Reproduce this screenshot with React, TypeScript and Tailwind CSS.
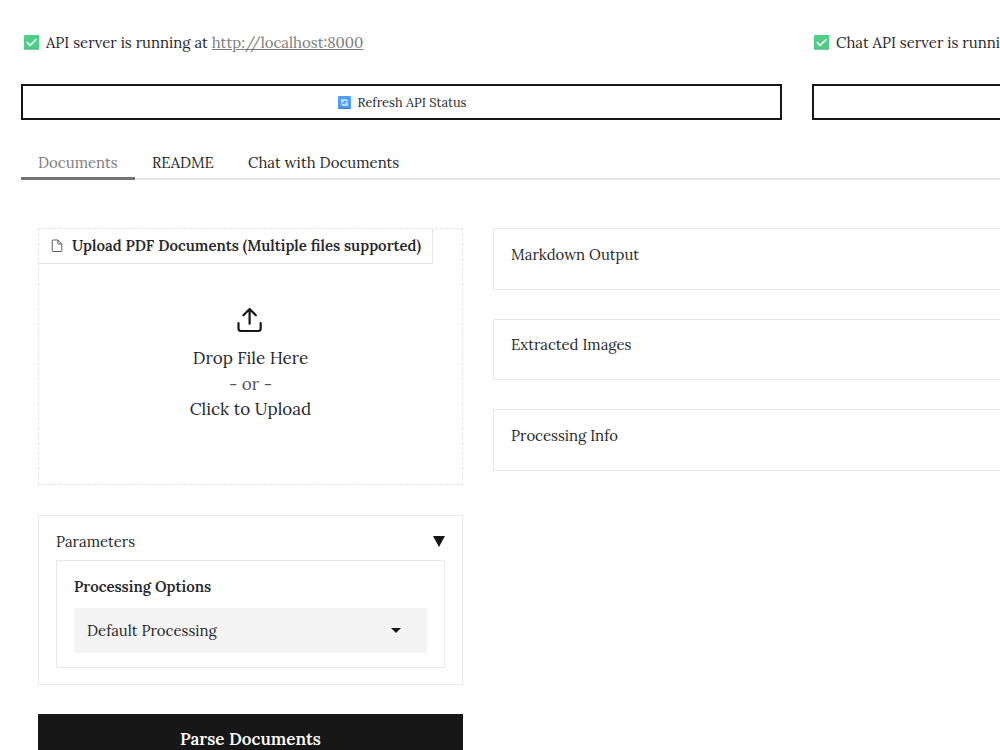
import { useState } from "react";

function CheckEmoji() {
    return (
        <svg width="16" height="15" viewBox="0 0 16 15" className="shrink-0">
            <rect x="0" y="0" width="15.2" height="14.6" rx="1.2" fill="#4fce87" />
            <path d="M0.1 13.4h15v0a1.2 1.2 0 0 1-1.2 1.2H1.3a1.2 1.2 0 0 1-1.2-1.2z" fill="#46bd7b" />
            <path d="M2.8 7l3.2 3.4 6.4-6.2" fill="none" stroke="#fff" strokeWidth="1.6" />
        </svg>
    );
}

function RefreshEmoji() {
    return (
        <svg width="13" height="13" viewBox="0 0 13 13" className="shrink-0">
            <rect width="13" height="13" rx="0.8" fill="#4f9ff5" />
            <rect y="11.6" width="13" height="1.4" rx="0.7" fill="#4184e0" />
            <path d="M9.5 5.4C8.8 3.9 6.3 3.2 4.5 4.6M3.5 7.5c0.7 1.5 3.2 2.3 5 0.9" fill="none" stroke="#d9ecff" strokeWidth="1.5" />
            <path d="M3 2.8v3.4h3.4zM10 10.2V6.8H6.6z" fill="#d9ecff" />
        </svg>
    );
}

function FileIcon() {
    return (
        <svg width="12" height="14" viewBox="0 0 12 14" fill="none" stroke="#5c5c5c" strokeWidth="1" strokeLinejoin="round" className="shrink-0">
            <path d="M6.9 1H2Q1.2 1 1.2 1.8V11.7Q1.2 12.5 2 12.5H10Q10.8 12.5 10.8 11.7V4.9z" />
            <path d="M6.9 1v3.9h3.9" />
        </svg>
    );
}

function UploadIcon() {
    return (
        <svg width="26" height="26" viewBox="0 0 26 26" fill="none" stroke="#171717" strokeWidth="2.2" strokeLinecap="round" strokeLinejoin="round" className="relative -left-px">
            <path d="M1.5 16.2V21.6Q1.5 24 3.9 24H21.3Q23.7 24 23.7 21.6V16.2" />
            <path d="M12.6 16.7V2.2M6.4 8.2L12.6 2l6.2 6.2" />
        </svg>
    );
}

const tabs = [
    { label: "Documents", className: "w-[114px]" },
    { label: "README", className: "w-[96px]" },
    { label: "Chat with Documents", className: "w-[185px]" },
];

const panels = [
    { label: "Markdown Output", className: "h-[62px] pt-[14px]" },
    { label: "Extracted Images", className: "h-[61px] pt-[13px]" },
    { label: "Processing Info", className: "h-[62px] pt-[14px]" },
];

export default function App() {
    const [activeTab, setActiveTab] = useState("Documents");

    return (
        <div className="h-[750px] w-[1000px] overflow-hidden bg-white pl-[21px] font-['Lora','Liberation_Serif',serif] text-[14.92px] leading-6 text-[#27272a]">
            {/* Server status */}
            <div className="flex gap-[30px] pt-[30px]">
                <div className="w-[761px] shrink-0">
                    <div className="flex h-6 items-center gap-[6px] whitespace-nowrap pl-[3px]">
                        <CheckEmoji />
                        <span className="pt-[2px]">
                            API server is running at{" "}
                            <a href="http://localhost:8000" className="text-[#7c7c7c] underline">http://localhost:8000</a>
                        </span>
                    </div>
                    <button className="mt-[30px] flex h-9 w-full items-center justify-center gap-[6px] border-2 border-[#171717] pl-[2px] text-[12.8px]">
                        <RefreshEmoji />
                        <span className="pt-px">Refresh API Status</span>
                    </button>
                </div>
                <div className="w-[761px] shrink-0">
                    <div className="flex h-6 items-center gap-[6px] whitespace-nowrap pl-[2px]">
                        <CheckEmoji />
                        <span className="pt-[2px]">Chat API server is running</span>
                    </div>
                    <button aria-label="Refresh Chat API Status" className="mt-[30px] block h-9 w-full border-2 border-[#171717]" />
                </div>
            </div>

            {/* Tabs */}
            <div className="mt-[26px] flex h-[34px] shadow-[inset_0_-2px_0_#e5e5e5]">
                {tabs.map((tab) => (
                    <button
                        key={tab.label}
                        onClick={() => setActiveTab(tab.label)}
                        className={`shrink-0 whitespace-nowrap border-b-[3px] pl-[17px] pt-[3px] text-left ${tab.className} ${
                            activeTab === tab.label ? "border-[#737373] text-[#7c7c7c]" : "border-transparent"
                        }`}
                    >
                        {tab.label}
                    </button>
                ))}
            </div>

            <div className="flex gap-[30px] pl-[17px] pt-12">
                {/* Left column */}
                <div className="w-[425px] shrink-0">
                    <div className="flex h-[257px] flex-col border border-dashed border-[#e4e4e7]">
                        <div className="flex h-[35px] w-[394px] items-center gap-[9px] whitespace-nowrap border-b border-r border-[#e4e4e7] pl-3 font-semibold">
                            <FileIcon />
                            <span>Upload PDF Documents (Multiple files supported)</span>
                        </div>
                        <div className="flex flex-col items-center pt-[43px] text-[17.05px] leading-[25.5px]">
                            <UploadIcon />
                            <div className="mt-[13px]">Drop File Here</div>
                            <div className="text-[#52525b]">- or -</div>
                            <div>Click to Upload</div>
                        </div>
                    </div>

                    <div className="mt-[30px] h-[170px] border border-[#e8e8e8] px-[17px] pt-[13px]">
                        <div className="flex h-6 items-center justify-between">
                            <span className="pt-px">Parameters</span>
                            <svg width="12" height="11" viewBox="0 0 12 11">
                                <path d="M0 0h12L6 11z" fill="#171717" />
                            </svg>
                        </div>
                        <div className="mt-[7px] h-[108px] border border-[#e8e8e8] px-[17px] pt-[14px]">
                            <div className="font-semibold">Processing Options</div>
                            <div className="mt-[9px] flex h-[45px] items-center justify-between bg-[#f4f4f4] pl-[13px] pr-[26px]">
                                <span>Default Processing</span>
                                <svg width="10" height="5" viewBox="0 0 10 5">
                                    <path d="M0 0h10L5 5z" fill="#171717" />
                                </svg>
                            </div>
                        </div>
                    </div>

                    <button className="mt-[29px] h-[50px] w-full bg-[#171717] text-[17px] font-semibold text-white">
                        Parse Documents
                    </button>
                </div>

                {/* Output panels */}
                <div className="flex w-[1040px] shrink-0 flex-col gap-[29px]">
                    {panels.map((panel) => (
                        <div key={panel.label} className={`border border-[#e8e8e8] px-[17px] ${panel.className}`}>
                            {panel.label}
                        </div>
                    ))}
                </div>
            </div>
        </div>
    );
}
